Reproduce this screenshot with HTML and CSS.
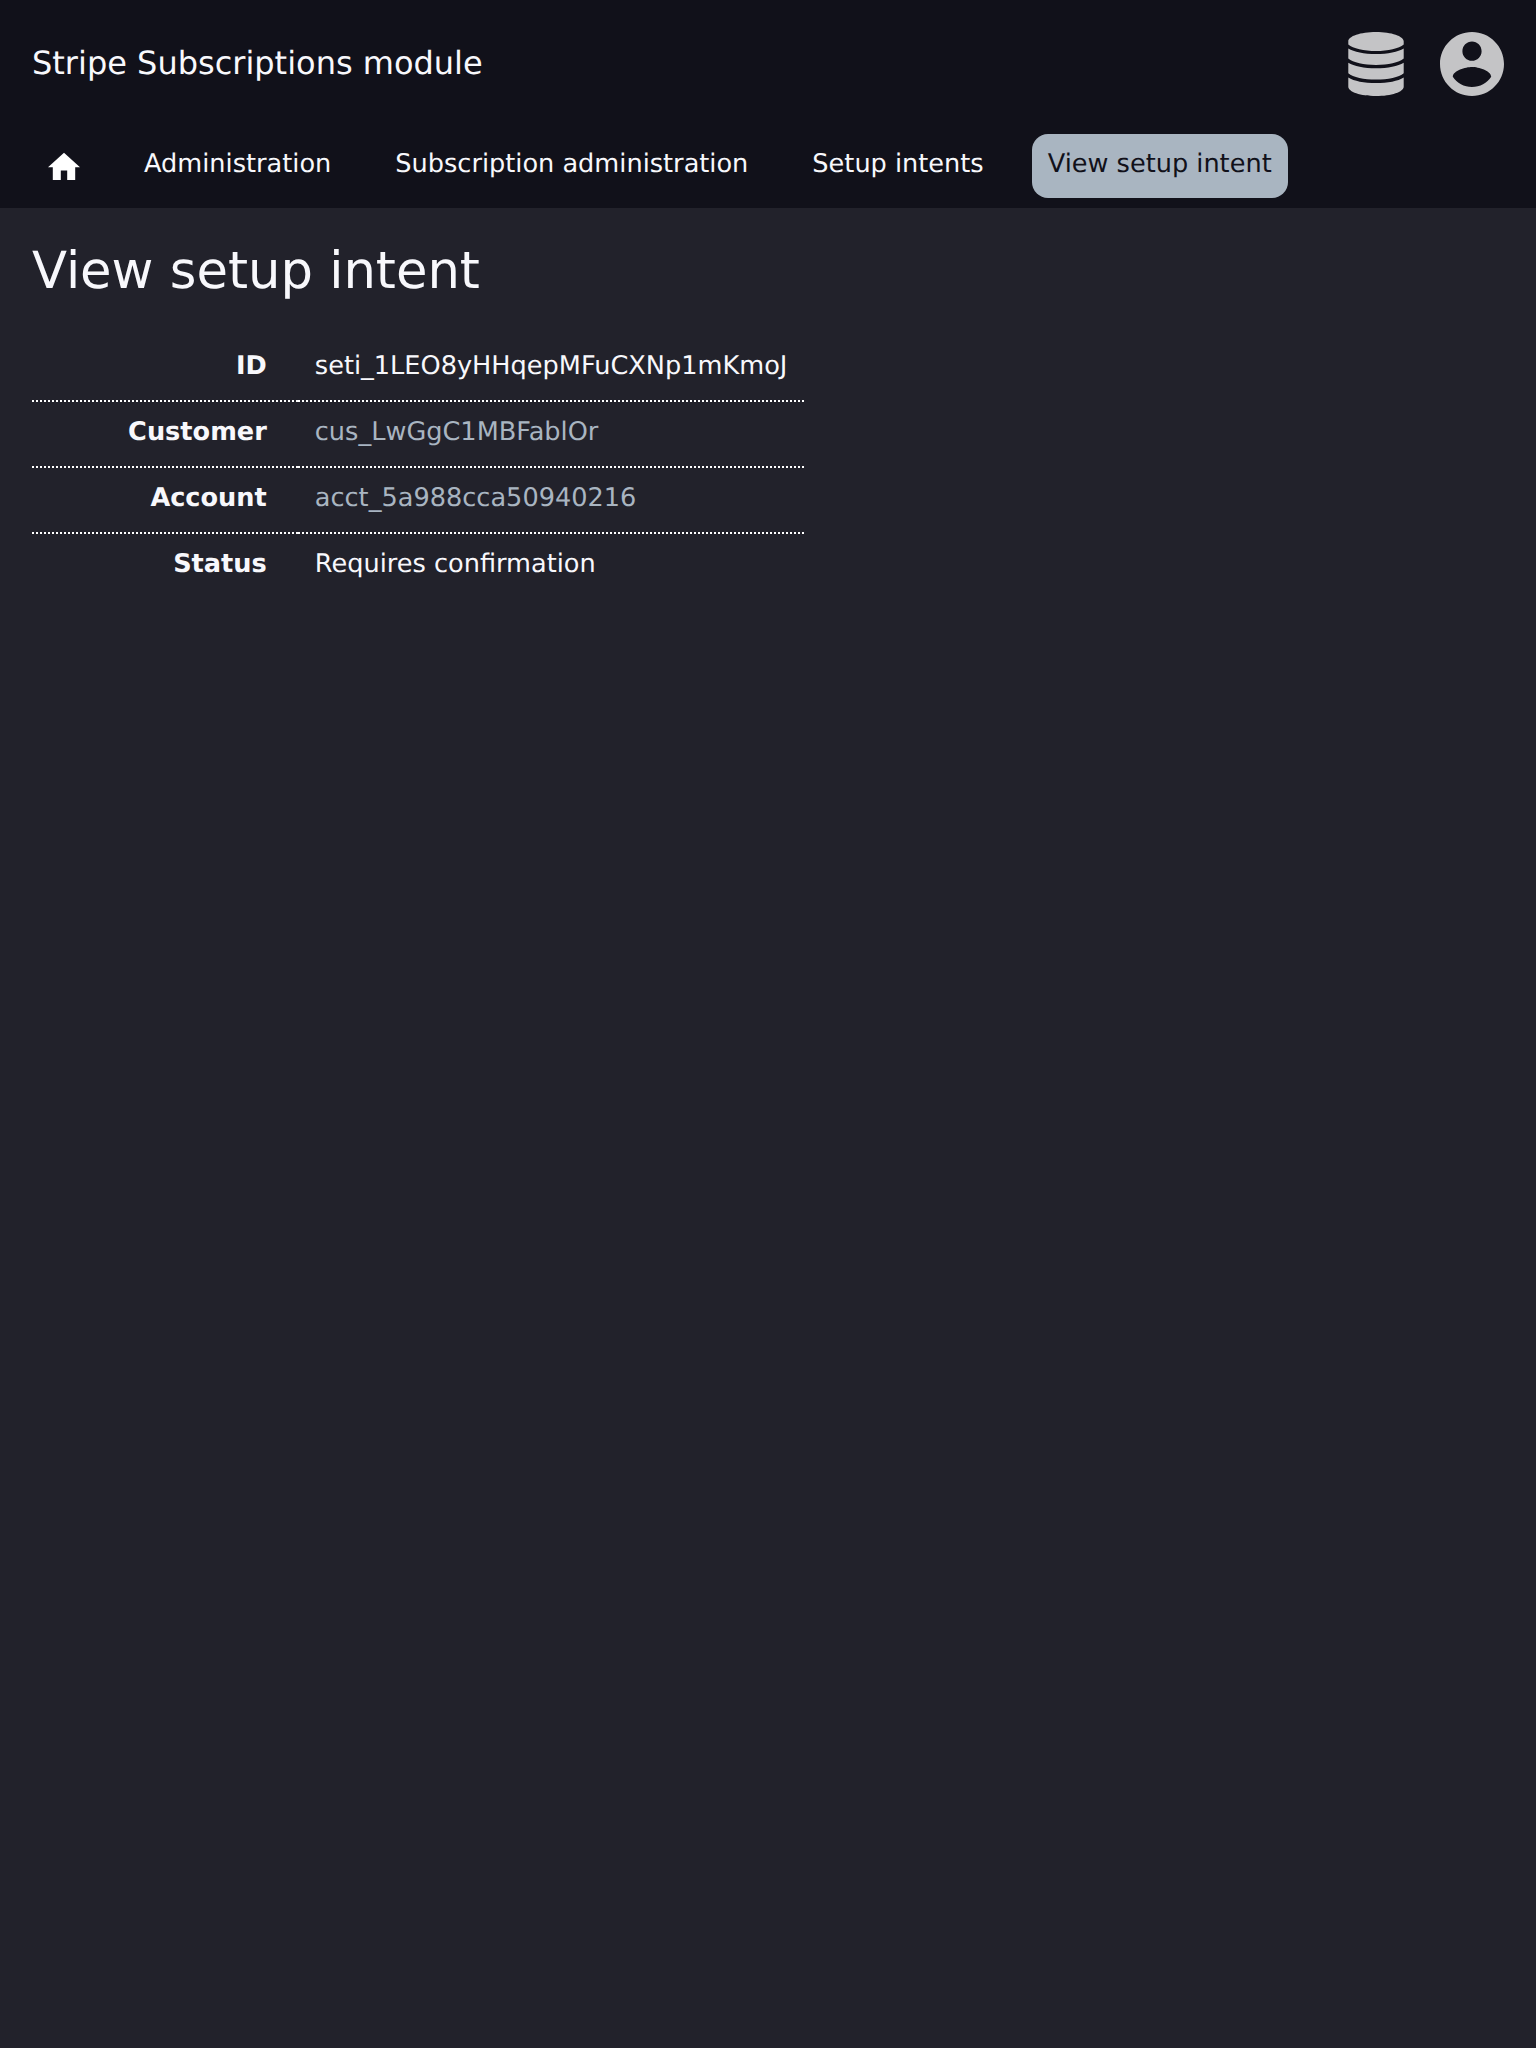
FILE: index.html
```html
<!DOCTYPE html>
<html lang="en">
<head>
<meta charset="utf-8">
<title>View setup intent</title>
<link rel="stylesheet" href="styles.css">
</head>
<body>
<header class="header">
  <div class="topbar">
    <div class="brand">Stripe Subscriptions module</div>
    <div class="actions">
      <svg class="icon-database" viewBox="0 0 56 64"><path d="M.3 9.3C.3 4.2 12.5 0 28 0S55.7 4.2 55.7 9.3V12.5C51 16.5 40 19 28 19S5 16.5 .3 12.5ZM.3 16.5C6 20 16 22 28 22S50 20 55.7 16.5V26.6C51 30.6 40 33 28 33S5 30.6 .3 26.6ZM.3 30.8C6 34.3 16 36.3 28 36.3S50 34.3 55.7 30.8V41.2C51 45.2 40 47.6 28 47.6S5 45.2 .3 41.2ZM.3 45.4C6 49 16 51 28 51S50 49 55.7 45.4V54.7C55.7 59.8 43.5 64 28 64S.3 59.8 .3 54.7Z"/></svg>
      <svg class="icon-account" viewBox="2 2 20 20"><path d="M12 2C6.48 2 2 6.48 2 12s4.48 10 10 10 10-4.48 10-10S17.52 2 12 2zm0 3c1.66 0 3 1.34 3 3s-1.34 3-3 3-3-1.34-3-3 1.34-3 3-3zm0 14.2c-2.5 0-4.71-1.28-6-3.22.03-1.99 4-3.08 6-3.08 1.99 0 5.97 1.09 6 3.08-1.29 1.94-3.5 3.22-6 3.22z"/></svg>
    </div>
  </div>
  <nav class="nav">
    <a class="nav-item nav-home"><svg class="icon-home" viewBox="2 2.5 20 17.5"><path d="M10 20v-6h4v6h5v-8h3L12 3 2 12h3v8z"/></svg></a>
    <a class="nav-item">Administration</a>
    <a class="nav-item">Subscription administration</a>
    <a class="nav-item">Setup intents</a>
    <a class="nav-item current">View setup intent</a>
  </nav>
</header>
<main class="content">
  <h1 class="title">View setup intent</h1>
  <table class="details">
    <tr><th>ID</th><td>seti_1LEO8yHHqepMFuCXNp1mKmoJ</td></tr>
    <tr><th>Customer</th><td><a class="link">cus_LwGgC1MBFablOr</a></td></tr>
    <tr><th>Account</th><td><a class="link">acct_5a988cca50940216</a></td></tr>
    <tr><th>Status</th><td>Requires confirmation</td></tr>
  </table>
</main>
</body>
</html>
```
FILE: styles.css
```css
* { box-sizing: border-box; }
body {
  margin: 0;
  min-height: 100vh;
  background: #22222b;
  color: #f8f8fc;
  font-family: "DejaVu Sans", sans-serif;
  font-size: 25.6px;
  text-rendering: geometricPrecision;
}
.header { height: 208px; background: #11111a; }
.topbar {
  display: flex;
  justify-content: space-between;
  align-items: center;
  height: 128px;
  padding: 0 32px;
}
.brand { padding-bottom: 2px; font-size: 32px; line-height: 62px; }
.actions { display: flex; gap: 36px; }
.icon-database { width: 56px; height: 64px; fill: #c4c4c6; }
.icon-account { width: 64px; height: 64px; fill: #c4c4c6; }
.nav { display: flex; gap: 32px; padding: 6px 32px 0; }
.nav-item {
  height: 64px;
  padding: 0 16px;
  border-radius: 16px;
  line-height: 60px;
  white-space: nowrap;
}
.nav-home { display: flex; padding-top: 18px; }
.icon-home { width: 32px; height: 28px; fill: #fff; }
.current { background: #a9b5c1; color: #11111a; }
.content { padding: 32px; }
.title {
  margin: 0 0 32px;
  padding-bottom: 2px;
  font-size: 51.2px;
  font-weight: 400;
  line-height: 62px;
}
.details {
  width: 772px;
  table-layout: fixed;
  border-collapse: separate;
  border-spacing: 0;
  line-height: 60px;
}
.details th, .details td {
  height: 66px;
  padding: 0 16px 4px 16.8px;
  border-bottom: 2px dotted #fff;
  text-align: left;
}
.details th { width: 266px; padding-right: 31.2px; text-align: right; }
.details tr:last-child > * { height: 64px; border-bottom: 0; }
.link { color: #a9b5c1; }
```
